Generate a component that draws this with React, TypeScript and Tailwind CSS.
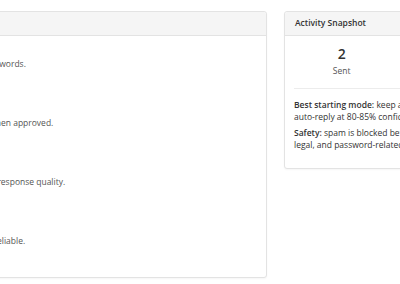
import { ReactNode } from 'react'

const rules = [
  {
    title: 'Keyword triggers',
    text: 'Reply automatically only when the incoming email matches one of your saved keywords.',
  },
  {
    title: 'Approval mode',
    text: 'Generated replies are saved as drafts in your inbox, and are only ever sent out when approved.',
  },
  {
    title: 'Confidence threshold',
    text: 'Use a higher confidence threshold to trade off fewer automatic replies for better response quality.',
  },
  {
    title: 'Learning',
    text: 'Let the assistant learn from your edits so that future drafts become much more reliable.',
  },
]

const stats = [
  { value: 2, label: 'Sent' },
  { value: 1, label: 'Drafted' },
  { value: 0, label: 'Skipped' },
]

function Card({ title, className, children }: { title: string; className?: string; children: ReactNode }) {
  return (
    <div className={`bg-white border border-[#e3e3e3] rounded-[3px] shadow-[0_1px_2px_rgba(0,0,0,0.04)] ${className ?? ''}`}>
      <div className="h-[24px] flex items-center px-[10px] bg-[#f5f5f5] border-b border-[#e3e3e3] rounded-t-[3px]">
        <h2 className="text-[8.5px] font-semibold text-[#333]">{title}</h2>
      </div>
      {children}
    </div>
  )
}

export default function App() {
  return (
    <div className="w-[400px] h-[284px] overflow-hidden bg-white font-['Open_Sans',sans-serif] text-[#333]">
      <div className="flex items-start gap-[17px] pt-[11px] ml-[-334px]">
        <Card title="Automation Rules" className="w-[601px] shrink-0">
          <div className="flex flex-col gap-[33px] px-[10px] pt-[8px] pb-[30px]">
            {rules.map((rule) => (
              <div key={rule.title} className="flex flex-col gap-[2px] text-[8.5px] leading-[12px]">
                <span className="font-semibold">{rule.title}</span>
                <p className="text-[#555]">{rule.text}</p>
              </div>
            ))}
          </div>
        </Card>

        <Card title="Activity Snapshot" className="w-[306px] shrink-0">
          <div className="px-[9px] pt-[10px] pb-[17px]">
            <div className="grid grid-cols-3 pb-[11px] border-b border-[#ececec]">
              {stats.map((s) => (
                <div key={s.label} className="flex flex-col items-center">
                  <span className="text-[14px] leading-[16px] font-semibold text-[#333]">{s.value}</span>
                  <span className="mt-[3px] text-[8.5px] leading-[12px] text-[#555]">{s.label}</span>
                </div>
              ))}
            </div>
            <div className="mt-[10px] flex flex-col gap-[4px] text-[8.5px] leading-[12px] text-[#333]">
              <p>
                <span className="font-semibold">Best starting mode:</span> keep approval mode on first, then enable
                <br />
                auto-reply at 80-85% confidence once drafts look right.
              </p>
              <p>
                <span className="font-semibold">Safety:</span> spam is blocked before any reply is drafted. Billing,
                <br />
                legal, and password-related messages always need review.
              </p>
            </div>
          </div>
        </Card>
      </div>
    </div>
  )
}
